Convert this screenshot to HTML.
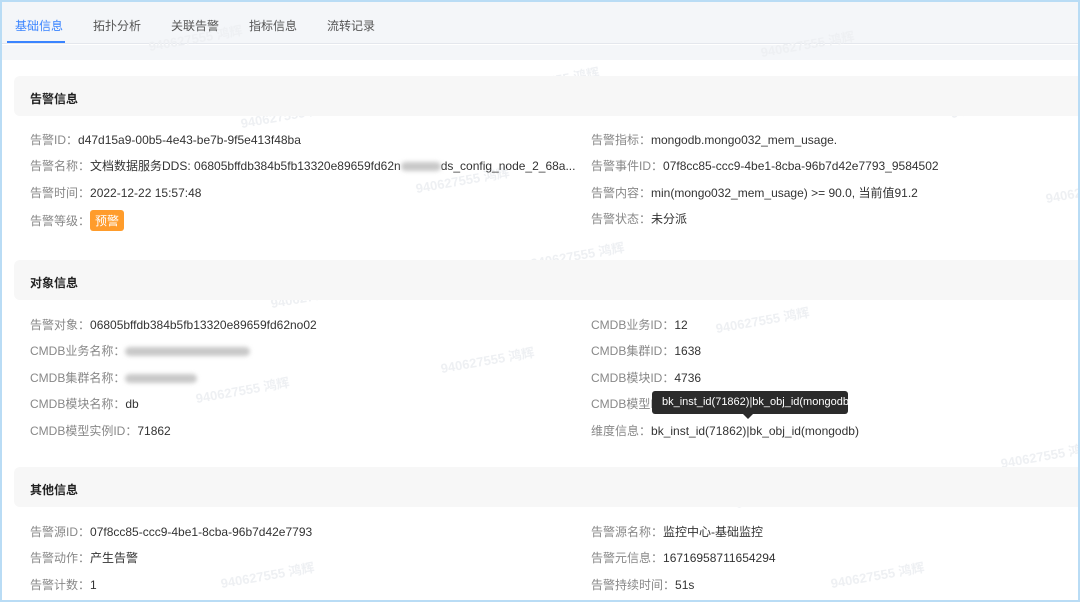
<!DOCTYPE html>
<html><head><meta charset="utf-8"><style>
*{margin:0;padding:0;box-sizing:border-box}
body{width:1080px;height:602px;overflow:hidden;background:#fff;font-family:"Liberation Sans","Noto Sans CJK SC",sans-serif;font-size:12px;color:#333;position:relative}
.frame{position:absolute;left:0;top:0;width:1080px;height:602px;border:2px solid #b9dcf5;z-index:10;pointer-events:none}
.tabs{position:absolute;left:0;top:0;width:1080px;height:44px;background:#f4f6f9;border-bottom:1px solid #e4e7ed}
.tab{position:absolute;top:17px;font-size:12px;color:#555}
.act{color:#3a84ff}
.ul{position:absolute;left:7px;top:41px;width:58px;height:2px;background:#3a84ff}
.gap{position:absolute;left:0;top:45px;width:1080px;height:15px;background:#f4f6f9}
.sec{position:absolute;left:14px;width:1066px;height:40px;background:#f7f7f7;border-radius:6px 0 0 6px;font-weight:bold;font-size:12px;color:#222;padding:14px 0 0 16px}
.r{position:absolute;white-space:nowrap}
.r .l{color:#888}
.tag{display:inline-block;background:#ff9c2b;color:#fff;border-radius:3px;padding:2px 5px;font-size:12px}
.blur{display:inline-block;height:9px;background:#c8c8c8;border-radius:5px;filter:blur(2px);vertical-align:middle}
.tip{position:absolute;left:652px;top:391px;width:196px;height:23px;background:#2b2b2b;color:#fff;border-radius:3px;font-size:11px;padding:5px 0 0 10px;white-space:nowrap}
.tip:after{content:"";position:absolute;left:91px;top:23px;border:5px solid transparent;border-top-color:#2b2b2b}
.wm{position:absolute;color:#eef0f3;font-size:13px;font-weight:bold;transform:rotate(-10deg);white-space:nowrap}
</style></head><body>
<div class="tabs">
<span class="tab act" style="left:15px">基础信息</span>
<span class="tab" style="left:93px">拓扑分析</span>
<span class="tab" style="left:171px">关联告警</span>
<span class="tab" style="left:249px">指标信息</span>
<span class="tab" style="left:327px">流转记录</span>
<div class="ul"></div>
</div>
<div class="gap"></div>
<span class="wm" style="left:148px;top:28px">940627555 鸿辉</span>
<span class="wm" style="left:760px;top:34px">940627555 鸿辉</span>
<span class="wm" style="left:505px;top:70px">940627555 鸿辉</span>
<span class="wm" style="left:950px;top:95px">940627555 鸿辉</span>
<span class="wm" style="left:240px;top:105px">940627555 鸿辉</span>
<span class="wm" style="left:415px;top:170px">940627555 鸿辉</span>
<span class="wm" style="left:1045px;top:180px">940627555 鸿辉</span>
<span class="wm" style="left:530px;top:245px">940627555 鸿辉</span>
<span class="wm" style="left:270px;top:285px">940627555 鸿辉</span>
<span class="wm" style="left:715px;top:310px">940627555 鸿辉</span>
<span class="wm" style="left:440px;top:350px">940627555 鸿辉</span>
<span class="wm" style="left:195px;top:380px">940627555 鸿辉</span>
<span class="wm" style="left:1000px;top:445px">940627555 鸿辉</span>
<span class="wm" style="left:735px;top:485px">940627555 鸿辉</span>
<span class="wm" style="left:220px;top:565px">940627555 鸿辉</span>
<span class="wm" style="left:830px;top:565px">940627555 鸿辉</span>

<div class="sec" style="top:76px">告警信息</div>
<div class="r" style="left:30px;top:131px"><span class="l">告警ID：</span>d47d15a9-00b5-4e43-be7b-9f5e413f48ba</div>
<div class="r" style="left:30px;top:157px"><span class="l">告警名称：</span>文档数据服务DDS: 06805bffdb384b5fb13320e89659fd62n<span class="blur" style="width:40px"></span>ds_config_node_2_68a...</div>
<div class="r" style="left:30px;top:184px"><span class="l">告警时间：</span>2022-12-22 15:57:48</div>
<div class="r" style="left:30px;top:210px"><span class="l">告警等级：</span><span class="tag">预警</span></div>
<div class="r" style="left:591px;top:131px"><span class="l">告警指标：</span>mongodb.mongo032_mem_usage.</div>
<div class="r" style="left:591px;top:157px"><span class="l">告警事件ID：</span>07f8cc85-ccc9-4be1-8cba-96b7d42e7793_9584502</div>
<div class="r" style="left:591px;top:184px"><span class="l">告警内容：</span>min(mongo032_mem_usage) &gt;= 90.0, 当前值91.2</div>
<div class="r" style="left:591px;top:210px"><span class="l">告警状态：</span>未分派</div>

<div class="sec" style="top:260px">对象信息</div>
<div class="r" style="left:30px;top:316px"><span class="l">告警对象：</span>06805bffdb384b5fb13320e89659fd62no02</div>
<div class="r" style="left:30px;top:342px"><span class="l">CMDB业务名称：</span><span class="blur" style="width:125px"></span></div>
<div class="r" style="left:30px;top:369px"><span class="l">CMDB集群名称：</span><span class="blur" style="width:72px"></span></div>
<div class="r" style="left:30px;top:395px"><span class="l">CMDB模块名称：</span>db</div>
<div class="r" style="left:30px;top:422px"><span class="l">CMDB模型实例ID：</span>71862</div>
<div class="r" style="left:591px;top:316px"><span class="l">CMDB业务ID：</span>12</div>
<div class="r" style="left:591px;top:342px"><span class="l">CMDB集群ID：</span>1638</div>
<div class="r" style="left:591px;top:369px"><span class="l">CMDB模块ID：</span>4736</div>
<div class="r" style="left:591px;top:395px"><span class="l">CMDB模型ID：</span></div>
<div class="r" style="left:591px;top:422px"><span class="l">维度信息：</span>bk_inst_id(71862)|bk_obj_id(mongodb)</div>
<div class="tip">bk_inst_id(71862)|bk_obj_id(mongodb)</div>

<div class="sec" style="top:467px">其他信息</div>
<div class="r" style="left:30px;top:523px"><span class="l">告警源ID：</span>07f8cc85-ccc9-4be1-8cba-96b7d42e7793</div>
<div class="r" style="left:30px;top:549px"><span class="l">告警动作：</span>产生告警</div>
<div class="r" style="left:30px;top:576px"><span class="l">告警计数：</span>1</div>
<div class="r" style="left:591px;top:523px"><span class="l">告警源名称：</span>监控中心-基础监控</div>
<div class="r" style="left:591px;top:549px"><span class="l">告警元信息：</span>16716958711654294</div>
<div class="r" style="left:591px;top:576px"><span class="l">告警持续时间：</span>51s</div>
<div class="frame"></div>
</body></html>
